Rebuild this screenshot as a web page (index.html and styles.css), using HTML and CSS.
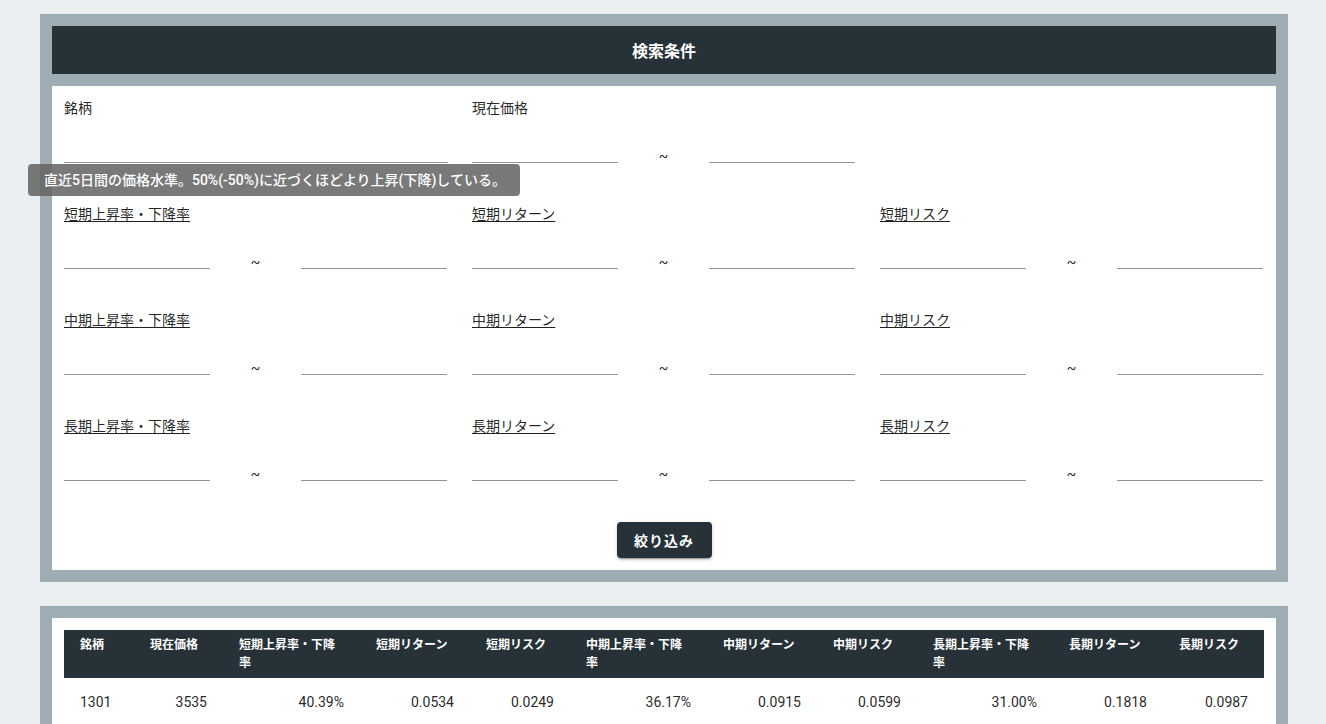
FILE: index.html
```html
<!DOCTYPE html>
<html lang="ja">
<head>
<meta charset="utf-8">
<title>検索条件</title>
<link rel="stylesheet" href="styles.css">
</head>
<body>
<div class="page">
  <section class="panel">
    <div class="panel-title">検索条件</div>
    <div class="card form-card">
      <div class="form-grid">
        <div class="field">
          <div class="label">銘柄</div>
          <div class="single"><input class="line" type="text"></div>
        </div>
        <div class="field">
          <div class="label">現在価格</div>
          <div class="range"><input class="line" type="text"><span class="tilde">~</span><input class="line" type="text"></div>
        </div>
        <div class="field"></div>

        <div class="field">
          <div class="label"><span class="tip">短期上昇率・下降率</span></div>
          <div class="range"><input class="line" type="text"><span class="tilde">~</span><input class="line" type="text"></div>
        </div>
        <div class="field">
          <div class="label"><span class="tip">短期リターン</span></div>
          <div class="range"><input class="line" type="text"><span class="tilde">~</span><input class="line" type="text"></div>
        </div>
        <div class="field">
          <div class="label"><span class="tip">短期リスク</span></div>
          <div class="range"><input class="line" type="text"><span class="tilde">~</span><input class="line" type="text"></div>
        </div>

        <div class="field">
          <div class="label"><span class="tip">中期上昇率・下降率</span></div>
          <div class="range"><input class="line" type="text"><span class="tilde">~</span><input class="line" type="text"></div>
        </div>
        <div class="field">
          <div class="label"><span class="tip">中期リターン</span></div>
          <div class="range"><input class="line" type="text"><span class="tilde">~</span><input class="line" type="text"></div>
        </div>
        <div class="field">
          <div class="label"><span class="tip">中期リスク</span></div>
          <div class="range"><input class="line" type="text"><span class="tilde">~</span><input class="line" type="text"></div>
        </div>

        <div class="field">
          <div class="label"><span class="tip">長期上昇率・下降率</span></div>
          <div class="range"><input class="line" type="text"><span class="tilde">~</span><input class="line" type="text"></div>
        </div>
        <div class="field">
          <div class="label"><span class="tip">長期リターン</span></div>
          <div class="range"><input class="line" type="text"><span class="tilde">~</span><input class="line" type="text"></div>
        </div>
        <div class="field">
          <div class="label"><span class="tip">長期リスク</span></div>
          <div class="range"><input class="line" type="text"><span class="tilde">~</span><input class="line" type="text"></div>
        </div>
      </div>
      <div class="actions">
        <button class="btn" type="button">絞り込み</button>
      </div>
    </div>
  </section>

  <section class="panel panel-table">
    <div class="card table-card">
      <table class="data">
        <colgroup>
          <col class="c1"><col class="c2"><col class="c3"><col class="c4"><col class="c5"><col class="c6"><col class="c7"><col class="c8"><col class="c9"><col class="c10"><col class="c11">
        </colgroup>
        <thead>
          <tr>
            <th>銘柄</th>
            <th>現在価格</th>
            <th>短期上昇率・下降率</th>
            <th>短期リターン</th>
            <th>短期リスク</th>
            <th>中期上昇率・下降率</th>
            <th>中期リターン</th>
            <th>中期リスク</th>
            <th>長期上昇率・下降率</th>
            <th>長期リターン</th>
            <th>長期リスク</th>
          </tr>
        </thead>
        <tbody>
          <tr>
            <td class="left">1301</td>
            <td>3535</td>
            <td>40.39%</td>
            <td>0.0534</td>
            <td>0.0249</td>
            <td>36.17%</td>
            <td>0.0915</td>
            <td>0.0599</td>
            <td>31.00%</td>
            <td>0.1818</td>
            <td>0.0987</td>
          </tr>
        </tbody>
      </table>
    </div>
  </section>

  <div class="tooltip">直近5日間の価格水準。50%(-50%)に近づくほどより上昇(下降)している。</div>
</div>
</body>
</html>
```

FILE: styles.css
```css
html, body {
  margin: 0;
  padding: 0;
  background: #eceff1;
}

body {
  font-family: "Roboto", "Noto Sans CJK JP", sans-serif;
  color: rgba(0, 0, 0, 0.87);
  font-size: 14px;
}

.page {
  position: relative;
  padding: 14px 38px 0 40px;
}

.panel {
  background: #9eacb3;
  padding: 12px;
}

.panel-table {
  margin-top: 24px;
}

.panel-title {
  background: #263238;
  color: #fff;
  height: 48px;
  display: flex;
  align-items: center;
  justify-content: center;
  font-weight: 700;
  font-size: 16px;
  margin-bottom: 12px;
}

.card {
  background: #fff;
  padding: 12px;
}

.form-grid {
  display: grid;
  grid-template-columns: repeat(3, 384px);
  column-gap: 24px;
  row-gap: 41px;
}

.field {
  height: 65px;
  display: flex;
  flex-direction: column;
}

.label {
  height: 20px;
  line-height: 20px;
  font-size: 14px;
  color: rgba(0, 0, 0, 0.87);
}

.tip {
  text-decoration: underline;
  text-underline-offset: 2px;
}

.single,
.range {
  height: 45px;
  display: flex;
  align-items: flex-end;
}

.range {
  display: grid;
  grid-template-columns: 146px 91px 146px;
  align-items: end;
}

.line {
  display: block;
  width: 100%;
  box-sizing: border-box;
  height: 30px;
  border: none;
  border-bottom: 1px solid #949494;
  background: transparent;
  outline: none;
  padding: 0;
  font: inherit;
}

.tilde {
  text-align: center;
  font-size: 14px;
  line-height: 16px;
  height: 16px;
  align-self: end;
  transform: translateY(1px);
}

.actions {
  display: flex;
  justify-content: center;
  margin-top: 41px;
}

.btn {
  background: #263238;
  color: #fff;
  border: none;
  border-radius: 4px;
  height: 36px;
  width: 95px;
  font-family: "Roboto", "Noto Sans CJK JP", sans-serif;
  font-weight: 700;
  font-size: 14px;
  letter-spacing: 1px;
  box-shadow: 0 3px 1px -2px rgba(0,0,0,.2), 0 2px 2px 0 rgba(0,0,0,.14), 0 1px 5px 0 rgba(0,0,0,.12);
  cursor: pointer;
}

.table-card {
  padding: 12px;
}

.data {
  width: 1200px;
  border-collapse: collapse;
  table-layout: fixed;
}

.c1 { width: 70px; }
.c2 { width: 89px; }
.c3 { width: 137px; }
.c4 { width: 110px; }
.c5 { width: 100px; }
.c6 { width: 137px; }
.c7 { width: 110px; }
.c8 { width: 100px; }
.c9 { width: 136px; }
.c10 { width: 110px; }
.c11 { width: 101px; }

.data thead tr {
  background: #263238;
}

.data th {
  color: #fff;
  font-size: 12px;
  font-weight: 700;
  text-align: left;
  vertical-align: top;
  line-height: 18px;
  padding: 6px 16px;
  height: 36px;
}

.data td {
  height: 48px;
  padding: 0 16px;
  font-size: 14px;
  text-align: right;
  color: rgba(0, 0, 0, 0.87);
  box-sizing: border-box;
}

.data td.left {
  text-align: left;
}

.tooltip {
  position: absolute;
  left: 28px;
  top: 164px;
  width: 492px;
  height: 32px;
  box-sizing: border-box;
  padding: 0 16px;
  background: rgba(97, 97, 97, 0.85);
  color: #fff;
  border-radius: 4px;
  font-size: 14px;
  font-weight: 500;
  line-height: 32px;
  white-space: nowrap;
}
```
